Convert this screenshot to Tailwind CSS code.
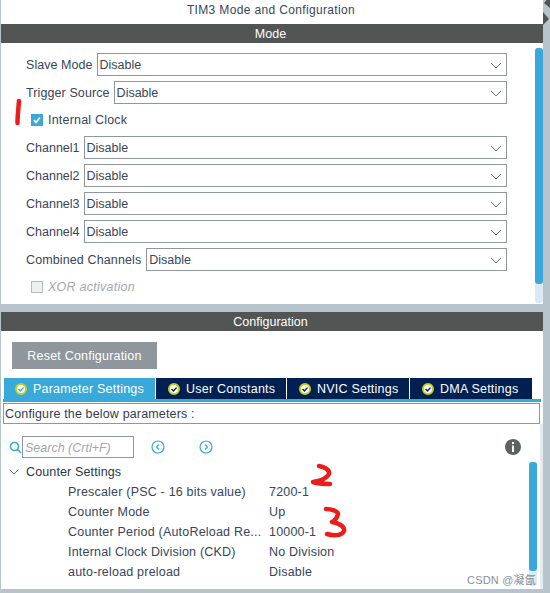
<!DOCTYPE html>
<html lang="en">
<head>
<meta charset="UTF-8">
<title>TIM3 Mode and Configuration</title>
<script src="https://cdn.jsdelivr.net/npm/@tailwindcss/browser@4"></script>
</head>
<body class="bg-[#b8c4cb]">
<div class="relative w-[550px] h-[593px] overflow-hidden bg-[#b8c4cb] pl-px font-['Liberation_Sans',Arial,sans-serif] text-[12.5px] text-[#39455a]">

  <!-- Mode panel -->
  <div class="relative w-[542px] h-[304px] bg-white">
    <div class="h-5 mb-1 flex items-center justify-center text-[12px] tracking-[0.35px] pr-[2px]">TIM3 Mode and Configuration</div>
    <div class="h-[19px] pt-[2px] bg-[#535554] text-white text-[12.5px] flex items-center justify-center pr-[3px]">Mode</div>

    <div class="pt-[10px] pl-[25px] w-[506px]">
      <div class="flex items-center h-[23px] mb-[5px]">
        <span class="mr-1 pt-[2px] tracking-[0.05px]">Slave Mode</span>
        <div class="flex-1 h-[23px] pt-[2px] border border-[#8f979c] flex items-center justify-between pl-[2px] pr-[4px]">Disable
          <svg width="12" height="7" viewBox="0 0 12 7" fill="none" stroke="#6b7378"><path d="M1 1l5 5 5-5"/></svg>
        </div>
      </div>
      <div class="flex items-center h-[23px]">
        <span class="mr-1 pt-[2px] tracking-[0.1px]">Trigger Source</span>
        <div class="flex-1 h-[23px] pt-[2px] border border-[#8f979c] flex items-center justify-between pl-[2px] pr-[4px]">Disable
          <svg width="12" height="7" viewBox="0 0 12 7" fill="none" stroke="#6b7378"><path d="M1 1l5 5 5-5"/></svg>
        </div>
      </div>
      <div class="flex items-center h-[32px] pl-[5px] gap-[5px]">
        <div class="w-3 h-3 bg-[#39a9dc] flex items-center justify-center">
          <svg width="10" height="10" viewBox="0 0 10 10" fill="none" stroke="white" stroke-width="1.6"><path d="M2 5l2 2.400L8 2.500"/></svg>
        </div>
        <span class="tracking-[0.2px]">Internal Clock</span>
      </div>
      <div class="flex items-center h-[23px] mb-[5px]">
        <span class="mr-1 pt-[2px]">Channel1</span>
        <div class="flex-1 h-[23px] pt-[2px] border border-[#8f979c] flex items-center justify-between pl-[2px] pr-[4px]">Disable
          <svg width="12" height="7" viewBox="0 0 12 7" fill="none" stroke="#6b7378"><path d="M1 1l5 5 5-5"/></svg>
        </div>
      </div>
      <div class="flex items-center h-[23px] mb-[5px]">
        <span class="mr-1 pt-[2px]">Channel2</span>
        <div class="flex-1 h-[23px] pt-[2px] border border-[#8f979c] flex items-center justify-between pl-[2px] pr-[4px]">Disable
          <svg width="12" height="7" viewBox="0 0 12 7" fill="none" stroke="#6b7378"><path d="M1 1l5 5 5-5"/></svg>
        </div>
      </div>
      <div class="flex items-center h-[23px] mb-[5px]">
        <span class="mr-1 pt-[2px]">Channel3</span>
        <div class="flex-1 h-[23px] pt-[2px] border border-[#8f979c] flex items-center justify-between pl-[2px] pr-[4px]">Disable
          <svg width="12" height="7" viewBox="0 0 12 7" fill="none" stroke="#6b7378"><path d="M1 1l5 5 5-5"/></svg>
        </div>
      </div>
      <div class="flex items-center h-[23px] mb-[5px]">
        <span class="mr-1 pt-[2px]">Channel4</span>
        <div class="flex-1 h-[23px] pt-[2px] border border-[#8f979c] flex items-center justify-between pl-[2px] pr-[4px]">Disable
          <svg width="12" height="7" viewBox="0 0 12 7" fill="none" stroke="#6b7378"><path d="M1 1l5 5 5-5"/></svg>
        </div>
      </div>
      <div class="flex items-center h-[23px]">
        <span class="mr-[5px] pt-[2px] tracking-[0.12px]">Combined Channels</span>
        <div class="flex-1 h-[23px] pt-[2px] border border-[#8f979c] flex items-center justify-between pl-[2px] pr-[4px]">Disable
          <svg width="12" height="7" viewBox="0 0 12 7" fill="none" stroke="#6b7378"><path d="M1 1l5 5 5-5"/></svg>
        </div>
      </div>
      <div class="flex items-center h-[32px] pl-[5px] gap-[5px] text-[#a3a8ac] italic">
        <div class="w-3 h-3 bg-[#eef0f2] border border-[#b5bbc0]"></div>
        <span class="tracking-[0.25px]">XOR activation</span>
      </div>
    </div>

    <!-- scrollbar -->
    <div class="absolute left-[534px] top-[48px] w-2 h-[255px] bg-[#d9e9f6] rounded-[3px]">
      <div class="w-2 h-[236px] bg-[#39a9dc] rounded-[3px]"></div>
    </div>
  </div>

  <!-- Configuration panel -->
  <div class="relative mt-2 w-[542px] h-[277px] bg-white">
    <div class="h-[19px] pt-[2px] bg-[#535554] text-white text-[12.5px] flex items-center justify-center pr-[3px]">Configuration</div>
    <div class="pt-[11px] pl-[11px]">
      <div class="w-[145px] h-[27px] pt-[2px] bg-[#8f979c] text-white flex items-center justify-center tracking-[0.2px]">Reset Configuration</div>
    </div>
    <div class="pt-[9px] pl-[3px]">
      <div class="flex h-[21px] w-[528px] text-white tracking-[0.22px]">
        <div class="w-[152px] bg-[#39a9dc] flex items-center gap-[6px] pl-[11px] border-r border-white">
          <svg width="12" height="12" viewBox="0 0 12 12" fill="none"><circle cx="6" cy="6" r="5" fill="white" stroke="#c3d01c" stroke-width="2"/><path d="M3.500 6l2 2 3-3.400" stroke="#39a9dc" stroke-width="1.400"/></svg>
          <span class="pt-[2px]">Parameter Settings</span>
        </div>
        <div class="w-[131px] bg-[#002052] flex items-center gap-[6px] pl-[12px] border-r border-white">
          <svg width="12" height="12" viewBox="0 0 12 12" fill="none"><circle cx="6" cy="6" r="5" fill="white" stroke="#c3d01c" stroke-width="2"/><path d="M3.500 6l2 2 3-3.400" stroke="#002052" stroke-width="1.400"/></svg>
          <span class="pt-[2px]">User Constants</span>
        </div>
        <div class="w-[123px] bg-[#002052] flex items-center gap-[6px] pl-[12px] border-r border-white">
          <svg width="12" height="12" viewBox="0 0 12 12" fill="none"><circle cx="6" cy="6" r="5" fill="white" stroke="#c3d01c" stroke-width="2"/><path d="M3.500 6l2 2 3-3.400" stroke="#002052" stroke-width="1.400"/></svg>
          <span class="pt-[2px]">NVIC Settings</span>
        </div>
        <div class="flex-1 bg-[#002052] flex items-center gap-[6px] pl-[12px]">
          <svg width="12" height="12" viewBox="0 0 12 12" fill="none"><circle cx="6" cy="6" r="5" fill="white" stroke="#c3d01c" stroke-width="2"/><path d="M3.500 6l2 2 3-3.400" stroke="#002052" stroke-width="1.400"/></svg>
          <span class="pt-[2px]">DMA Settings</span>
        </div>
      </div>
      <div class="w-[538px] h-[3px] -ml-px bg-[#39a9dc]"></div>
      <div class="w-[537px] h-[21px] mt-px -ml-px pt-[2px] border border-[#8f979c] flex items-center pl-px tracking-[0.15px] text-[#333c4e]">Configure the below parameters :</div>
    </div>

    <div class="flex items-center h-[22px] mt-[12px] pl-[8px]">
      <svg width="13" height="13" viewBox="0 0 13 13" fill="none" stroke="#39a9dc" stroke-width="1.600"><circle cx="5.500" cy="5.500" r="4"/><path d="M8.500 8.500L12 12"/></svg>
      <div class="w-[112px] h-[22px] pt-[2px] border border-[#8f979c] flex items-center pl-[2px] italic text-[#a3a8ac]">Search (Crtl+F)</div>
      <svg class="ml-[17px]" width="14" height="14" viewBox="0 0 14 14" fill="none" stroke="#39a9dc"><circle cx="7" cy="7" r="6" stroke-width="1.200"/><path d="M8 4.500L5.500 7 8 9.500" stroke-width="1.200"/></svg>
      <svg class="ml-[34px]" width="14" height="14" viewBox="0 0 14 14" fill="none" stroke="#39a9dc"><circle cx="7" cy="7" r="6" stroke-width="1.200"/><path d="M6 4.500L8.500 7 6 9.500" stroke-width="1.200"/></svg>
      <svg class="ml-[292px]" width="16" height="16" viewBox="0 0 16 16"><circle cx="8" cy="8" r="8" fill="#5f6265"/><rect x="7" y="3" width="2" height="2" fill="white"/><rect x="7" y="6.500" width="2" height="6.500" fill="white"/></svg>
    </div>
    <div class="flex items-center h-5 mt-[4px] pl-[8px] text-[#2c3647] tracking-[0.13px]">
      <svg class="mr-[7px]" width="10" height="6" viewBox="0 0 10 6" fill="none" stroke="#6b7378"><path d="M.5.5L5 5 9.500.5"/></svg>
      Counter Settings
    </div>
    <div class="grid grid-cols-[201px_1fr] pl-[67px] auto-rows-[20px] items-center tracking-[0.2px]">
      <div>Prescaler (PSC - 16 bits value)</div><div>7200-1</div>
      <div>Counter Mode</div><div>Up</div>
      <div>Counter Period (AutoReload Re...</div><div>10000-1</div>
      <div>Internal Clock Division (CKD)</div><div>No Division</div>
      <div>auto-reload preload</div><div>Disable</div>
    </div>

    <!-- scrollbar and light edge of the tab body -->
    <div class="absolute left-[528px] top-[150px] w-2 h-[124px] bg-[#d9e9f6] rounded-[3px]">
      <div class="w-2 h-[109px] bg-[#39a9dc] rounded-[3px]"></div>
    </div>
    <div class="absolute right-0 top-[112px] bottom-0 w-[3px] bg-[#e4ebee]"></div>
  </div>

  <!-- collapse arrows on the sash -->
  <svg class="absolute left-[543px] top-0" width="7" height="26" viewBox="0 0 7 26" fill="#535554"><path d="M7 -4L1 3 7 8zM0 12l6 7-6 6z"/></svg>

  <!-- red annotations -->
  <svg class="absolute left-0 top-0 pointer-events-none" width="550" height="593" fill="none" stroke="#ea1c1c" stroke-width="4.500" stroke-linecap="round" stroke-linejoin="round">
    <path d="M19 101C18.500 108 17.500 115 17.500 123"/>
    <path d="M319 466C325 467 330 470 329 474C327 478 320 481 313 482C319 484 325 484 330 484"/>
    <path d="M326 509C331 509 338 511 338 514C337 518 334 521 332 522C338 523 345 526 344 531C342 536 333 536 327 534"/>
  </svg>

  <div class="absolute left-[467px] top-[572px] text-[11px] text-[#8b8f93] tracking-[0.2px] font-['Liberation_Sans','Noto_Sans_CJK_SC',sans-serif]">CSDN @凝氤</div>
</div>
</body>
</html>
